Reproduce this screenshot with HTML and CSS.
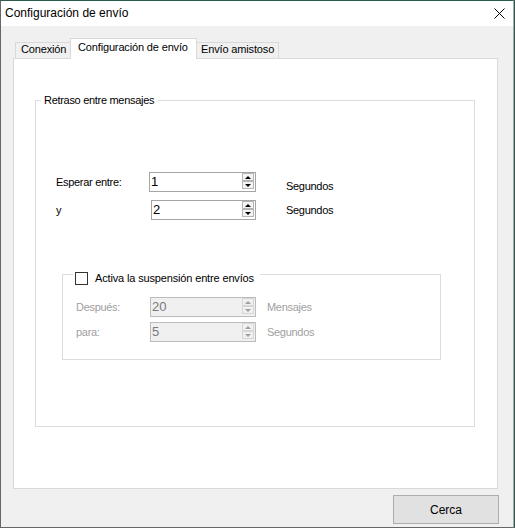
FILE: index.html
```html
<!DOCTYPE html>
<html lang="es">
  <head>
    <meta charset="UTF-8" />
    <meta name="viewport" content="width=device-width, initial-scale=1.0" />
    <title>Configuración de envío</title>
    <link rel="stylesheet" href="styles.css">
  </head>
  <body>
    <div class="window">
      <div class="titlebar">
        <span class="title">Configuración de envío</span>
        <svg class="close" width="11" height="11" viewBox="0 0 11 11">
          <path d="M0.5 0.5L10.5 10.5M10.5 0.5L0.5 10.5" stroke="#000" stroke-width="1" fill="none" />
        </svg>
      </div>

      <div class="client">
        <div class="tabs">
          <div class="tab first">Conexión</div>
          <div class="tab active">Configuración de envío</div>
          <div class="tab last">Envío amistoso</div>
        </div>

        <div class="page">
          <fieldset class="group">
            <legend>Retraso entre mensajes</legend>

            <div class="fields">
              <label>Esperar entre:</label>
              <div class="spin">
                <span class="value">1</span>
                <span class="arrows"><span class="up"></span><span class="down"></span></span>
              </div>
              <span class="unit low">Segundos</span>

              <label>y</label>
              <div class="spin shift">
                <span class="value">2</span>
                <span class="arrows"><span class="up"></span><span class="down"></span></span>
              </div>
              <span class="unit">Segundos</span>
            </div>

            <fieldset class="group sub">
              <legend>
                <label class="check"><input type="checkbox" id="pause" /> Activa la suspensión entre envíos</label>
              </legend>

              <div class="fields off">
                <label>Después:</label>
                <div class="spin">
                  <span class="value">20</span>
                  <span class="arrows"><span class="up"></span><span class="down"></span></span>
                </div>
                <span class="unit">Mensajes</span>

                <label>para:</label>
                <div class="spin">
                  <span class="value">5</span>
                  <span class="arrows"><span class="up"></span><span class="down"></span></span>
                </div>
                <span class="unit">Segundos</span>
              </div>
            </fieldset>
          </fieldset>
        </div>

        <div class="actions">
          <button class="btn">Cerca</button>
        </div>
      </div>
    </div>
  </body>
</html>
```

FILE: styles.css
```css
body {
  margin: 0;
  padding: 0;
  background-color: #2b5b4c;
  font-family: "Liberation Sans", Arial, sans-serif;
  font-size: 11px;
  color: #000;
}
.window {
  width: 514px;
  height: 528px;
  box-sizing: border-box;
  display: flex;
  flex-direction: column;
  background-color: #f0f0f0;
  border: 1px solid #666;
  border-top-color: #2b5b4c;
  border-right-color: #a8a8a8;
}
.titlebar {
  height: 25px;
  flex: none;
  display: flex;
  align-items: center;
  justify-content: space-between;
  padding: 0 8px 0 4px;
  background-color: #fff;
  font-size: 12px;
}
.title {
  padding-bottom: 1px;
}
.client {
  flex: 1;
  padding: 12px 0 0 12px;
}

/* tab strip */
.tabs {
  display: flex;
  align-items: flex-end;
  height: 20px;
  padding-left: 2px;
  position: relative;
  z-index: 1;
  letter-spacing: -0.15px;
}
.tab {
  height: 16px;
  box-sizing: border-box;
  border: 1px solid #d9d9d9;
  border-bottom: none;
  background-color: #f0f0f0;
  line-height: 13px;
  padding-left: 5px;
}
.tab.first {
  width: 55px;
  border-right: none;
}
.tab.active {
  width: 127px;
  height: 21px;
  margin-bottom: -1px;
  background-color: #fff;
  line-height: 17px;
  padding-left: 7px;
}
.tab.last {
  width: 82px;
  border-left: none;
  padding-left: 4px;
}
.page {
  width: 485px;
  height: 431px;
  box-sizing: border-box;
  border: 1px solid #d9d9d9;
  background-color: #fff;
  padding-left: 21px;
}

/* group boxes */
.group {
  width: 440px;
  height: 334px;
  box-sizing: border-box;
  margin: 34px 0 0 0;
  padding: 0;
  border: 1px solid #dcdcdc;
  letter-spacing: -0.3px;
}
.group legend {
  margin-left: 5px;
  padding: 0 4px 0 3px;
  line-height: 14px;
}
.group.sub {
  width: 379px;
  height: auto;
  margin: 42px 0 0 26px;
  padding: 0 0 17px 0;
}
.group.sub legend {
  margin-left: 10px;
  padding: 8px 6px 0 2px;
  line-height: 16px;
}
.check {
  display: flex;
  align-items: center;
  gap: 7px;
  letter-spacing: -0.15px;
}
.check input {
  appearance: none;
  margin: 0;
  width: 13px;
  height: 13px;
  box-sizing: border-box;
  border: 1px solid #333;
  background-color: #fff;
}

/* label / spinner / unit rows */
.fields {
  display: grid;
  grid-template-columns: 93px 107px auto;
  row-gap: 8px;
  align-items: center;
  margin: 65px 0 0 20px;
}
.fields .unit {
  padding-left: 30px;
}
.fields.off {
  grid-template-columns: 74px 106px auto;
  row-gap: 5px;
  margin: 11px 0 0 13px;
  color: #a0a0a0;
}
.fields.off .unit {
  padding-left: 11px;
}
.unit.low {
  padding-top: 8px;
}
.spin {
  display: flex;
  align-items: flex-start;
  height: 20px;
  box-sizing: border-box;
  border: 1px solid #a5a5a5;
  background-color: #fff;
  padding: 0 1px 0 1px;
  font-size: 13px;
  letter-spacing: 0;
}
.spin.shift {
  width: 105px;
  margin-left: 2px;
}
.spin .value {
  flex: 1;
  line-height: 18px;
}
.arrows {
  display: flex;
  flex-direction: column;
  width: 12px;
}
.arrows span {
  height: 8px;
  box-sizing: border-box;
  border: 1px solid #b4b4b4;
  background-color: #f4f4f4;
  display: flex;
  align-items: center;
  justify-content: center;
}
.arrows .up::before,
.arrows .down::before {
  content: "";
  border-left: 3px solid transparent;
  border-right: 3px solid transparent;
}
.arrows .up::before {
  border-bottom: 3px solid #000;
}
.arrows .down::before {
  border-top: 3px solid #000;
}
.off .spin {
  background-color: #f0f0f0;
  border-color: #bcbcbc;
  color: #7a7a7a;
}
.off .arrows span {
  border-color: #d6d6d6;
  background-color: #f0f0f0;
}
.off .arrows .up::before {
  border-bottom-color: #a0a0a0;
}
.off .arrows .down::before {
  border-top-color: #a0a0a0;
}

/* dialog button */
.actions {
  display: flex;
  justify-content: flex-end;
  padding: 6px 14px 0 0;
}
.btn {
  width: 106px;
  height: 29px;
  margin: 0;
  border: 1px solid #adadad;
  background-color: #e1e1e1;
  font-family: inherit;
  font-size: 12px;
  color: #000;
}
```
